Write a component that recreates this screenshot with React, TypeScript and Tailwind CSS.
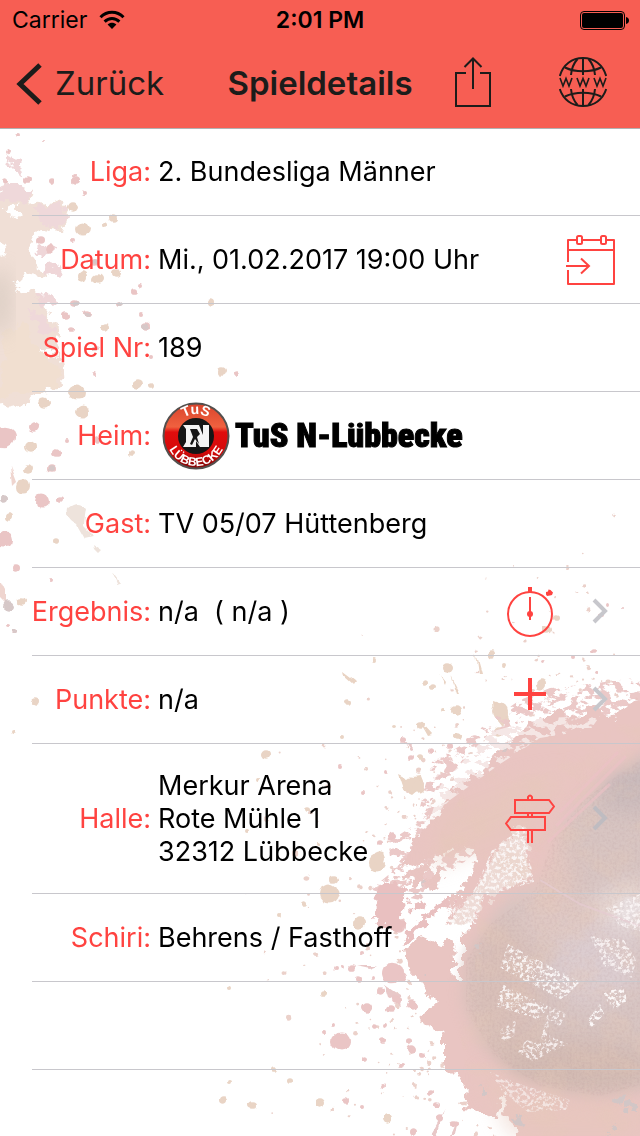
import type { ReactNode } from "react";

// [x, y, radius]
type Dot = [number, number, number];

const sandDots: Dot[] = [
  [73, 207, 5], [82, 229, 7], [114, 218, 4], [106, 226, 3], [82, 276, 5], [98, 279, 5],
  [116, 273, 4], [210, 302, 4], [105, 327, 4], [137, 384, 6], [151, 385, 3], [77, 392, 8],
  [222, 371, 4], [82, 412, 7], [44, 404, 6], [30, 447, 6], [27, 469, 5], [23, 487, 7],
  [9, 516, 4], [57, 541, 3], [22, 601, 4], [35, 701, 4], [14, 733, 2], [131, 453, 3],
  [347, 703, 3], [374, 661, 2], [447, 668, 5], [424, 683, 3], [433, 686, 3], [493, 655, 4],
  [504, 664, 2], [541, 685, 5], [547, 631, 4], [556, 618, 3], [443, 710, 2], [456, 711, 5],
  [458, 736, 4], [421, 724, 4], [393, 726, 2], [342, 738, 2], [266, 756, 5], [308, 808, 3],
  [411, 785, 9], [418, 787, 6], [500, 712, 8], [498, 732, 5], [420, 757, 3], [334, 880, 4],
  [329, 894, 10], [304, 903, 3], [376, 864, 9], [379, 858, 6], [359, 923, 5], [223, 1100, 4],
  [253, 1105, 4], [275, 1069, 3], [290, 1081, 3], [320, 1103, 5], [323, 993, 3], [388, 1119, 5],
  [278, 914, 2], [258, 781, 2], [317, 843, 2], [246, 831, 2], [229, 989, 2], [230, 1081, 2],
];

const roseDots: Dot[] = [
  [17, 136, 2], [43, 140, 1], [8, 150, 2], [4, 179, 3], [27, 180, 3], [51, 181, 3],
  [77, 181, 4], [75, 176, 2], [83, 194, 2], [40, 241, 4], [50, 249, 5], [73, 240, 2],
  [95, 263, 4], [133, 291, 3], [141, 287, 2], [117, 304, 3], [74, 304, 4], [87, 314, 3],
  [65, 315, 4], [72, 330, 3], [146, 326, 4], [151, 357, 2], [141, 314, 2], [96, 348, 3],
  [93, 375, 2], [236, 374, 3], [35, 427, 5], [57, 453, 4], [51, 468, 4], [42, 501, 7],
  [60, 499, 3], [4, 437, 11], [16, 568, 4], [4, 540, 8], [50, 580, 2], [14, 632, 2],
  [7, 626, 2], [66, 441, 2], [96, 440, 3],
  [607, 606, 2], [601, 615, 2], [593, 651, 3], [573, 657, 2], [622, 609, 1], [588, 686, 2],
  [544, 662, 2], [596, 671, 2], [341, 1041, 9], [366, 1007, 5], [352, 968, 3], [342, 967, 2],
  [358, 978, 3], [373, 978, 2], [380, 991, 4], [393, 973, 11], [402, 978, 5], [390, 1009, 4],
  [395, 1000, 4], [399, 1000, 3], [374, 1027, 3], [382, 1041, 3], [385, 1025, 2], [410, 1041, 3],
  [412, 1050, 5], [424, 1056, 3], [364, 1058, 3], [346, 1100, 3], [323, 1033, 2], [332, 1025, 2],
  [412, 1004, 5], [363, 953, 2], [336, 969, 2], [400, 926, 6], [392, 836, 4], [380, 842, 3],
  [363, 793, 2], [341, 765, 2], [386, 772, 2], [410, 757, 3], [430, 750, 3], [404, 739, 3],
  [449, 746, 3], [469, 741, 2], [463, 752, 3], [447, 760, 3], [413, 1131, 4], [430, 1092, 3],
  [440, 1119, 4], [437, 1104, 3], [454, 1124, 4], [402, 1066, 2], [362, 1106, 2], [384, 1085, 2],
];

const greyDots: Dot[] = [
  [8, 606, 5], [51, 468, 3], [76, 305, 3], [118, 304, 3], [145, 326, 3], [95, 262, 3],
  [5, 499, 4], [14, 632, 2], [87, 315, 2], [424, 885, 4],
];

const ballDots: Dot[] = [
  [482, 1092, 4], [620, 1100, 7], [631, 1108, 5], [518, 1120, 4], [478, 948, 4],
  [428, 974, 2], [612, 1128, 4], [502, 750, 3],
];

// Fine droplets spread around the ball, same pattern on every render
const makeSpray = (count: number, seed: number): Dot[] => {
  let state = seed;
  const next = () => {
    state = (state * 16807) % 2147483647;
    return state / 2147483647;
  };
  return Array.from({ length: count }, (): Dot => {
    const angle = Math.PI * (0.5 + next() * 0.86);
    const distance = 215 + next() * next() * 190;
    return [
      618 + Math.cos(angle) * distance,
      925 - Math.sin(angle) * distance * 1.06,
      0.8 + next() * next() * 2.4,
    ];
  });
};

const spray = makeSpray(260, 4711);

const Dots = ({ dots, className }: { dots: Dot[]; className: string }) => (
  <g className={className}>
    {dots.map(([x, y, r], i) => (
      <ellipse key={i} cx={x} cy={y} rx={r} ry={r * 0.94} />
    ))}
  </g>
);

const Splatter = () => (
  <svg
    viewBox="0 0 640 1136"
    preserveAspectRatio="xMaxYMax slice"
    className="absolute inset-0 h-full w-full"
    aria-hidden="true"
  >
    <defs>
      <filter id="rough" x="-10%" y="-10%" width="120%" height="120%" colorInterpolationFilters="sRGB">
        <feTurbulence type="fractalNoise" baseFrequency="0.09" numOctaves="4" seed="8" />
        <feDisplacementMap in="SourceGraphic" scale="18" xChannelSelector="R" yChannelSelector="G" />
      </filter>
      <filter id="drop" x="-5%" y="-5%" width="110%" height="110%" colorInterpolationFilters="sRGB">
        <feTurbulence type="fractalNoise" baseFrequency="0.08" numOctaves="1" seed="3" />
        <feDisplacementMap in="SourceGraphic" scale="8" xChannelSelector="R" yChannelSelector="G" />
      </filter>
      <filter id="soft" x="-30%" y="-30%" width="160%" height="160%" colorInterpolationFilters="sRGB">
        <feGaussianBlur stdDeviation="10" />
      </filter>
      <filter id="edge" x="-10%" y="-10%" width="120%" height="120%" colorInterpolationFilters="sRGB">
        <feGaussianBlur stdDeviation="7" />
      </filter>
      {/* Breaks a shape into torn flecks */}
      <filter id="torn" x="-10%" y="-10%" width="120%" height="120%" colorInterpolationFilters="sRGB">
        <feTurbulence type="fractalNoise" baseFrequency="0.09 0.14" numOctaves="4" seed="21" result="n" />
        <feColorMatrix in="n" type="matrix" values="0 0 0 0 1  0 0 0 0 1  0 0 0 0 1  14 0 0 0 -7" result="m" />
        <feComposite in="SourceGraphic" in2="m" operator="in" />
      </filter>
      <filter id="speckle" x="-10%" y="-10%" width="120%" height="120%" colorInterpolationFilters="sRGB">
        <feTurbulence type="fractalNoise" baseFrequency="0.3" numOctaves="3" seed="5" result="n" />
        <feColorMatrix in="n" type="matrix" values="0 0 0 0 1  0 0 0 0 1  0 0 0 0 1  5 0 0 0 -2.3" result="m" />
        <feComposite in="SourceGraphic" in2="m" operator="in" />
      </filter>
      <filter id="grain" x="0" y="0" width="100%" height="100%" colorInterpolationFilters="sRGB">
        <feTurbulence type="fractalNoise" baseFrequency="0.03 0.04" numOctaves="4" seed="12" result="n" />
        <feColorMatrix in="n" type="matrix" values="0 0 0 0 0.9  0 0 0 0 0.79  0 0 0 0 0.72  0 3 0 0 -1.3" result="m" />
        <feComposite in="m" in2="SourceAlpha" operator="in" />
      </filter>
      <filter id="fibre" x="0" y="0" width="100%" height="100%" colorInterpolationFilters="sRGB">
        <feTurbulence type="fractalNoise" baseFrequency="0.4" numOctaves="2" seed="30" result="n" />
        <feColorMatrix in="n" type="matrix" values="0 0 0 0 0.62  0 0 0 0 0.48  0 0 0 0 0.5  0 3 0 0 -1.2" result="m" />
        <feComposite in="m" in2="SourceAlpha" operator="in" />
      </filter>
      <clipPath id="ballClip">
        <path d="M680 730 L612 774 L583 799 L560 830 L545 870 L530 886 L505 900 L487 922 L466 955 L462 1000 L480 1045 L515 1078 L560 1094 L600 1098 L680 1084Z" />
      </clipPath>
    </defs>

    {/* Left splash */}
    <g filter="url(#rough)">
      <path fill="#f0dfd6" d="M-10 190 L14 184 L34 190 L30 202 L40 206 L62 200 L70 212 L64 230 L40 228 L32 238 L28 254 L36 266 L50 272 L48 278 L26 274 L16 290 L32 288 L42 302 L52 318 L60 334 L58 350 L30 350 L60 356 L62 388 L42 392 L26 402 L-10 408Z" />
      <path fill="#efd8da" d="M-10 190 L14 184 L34 190 L26 204 L10 200 L-10 206Z M36 210 L60 202 L70 214 L60 228 L38 224Z M30 310 L44 312 L56 332 L42 336Z" />
      <path fill="#f1dfd0" d="M4 330 L24 322 L34 346 L56 362 L58 388 L24 394 L0 398Z" />
      <path fill="#efd6d8" d="M4 154 L12 158 L26 172 L22 178 L8 164Z M36 252 L50 242 L54 250 L44 258Z M44 268 L56 264 L60 274 L48 276Z M34 298 L56 296 L58 304 L44 306Z" />
      <path fill="#ffffff" d="M4 208 L16 202 L18 216 L6 220Z M-4 238 L4 244 L8 260 L0 256Z M14 286 L30 284 L24 292Z" />
    </g>
    <ellipse cx="0" cy="302" rx="10" ry="34" fill="#c9beb4" opacity="0.55" filter="url(#soft)" />
    <g filter="url(#drop)">
      <path fill="#eee3dc" d="M68 508 Q78 500 86 508 Q84 520 84 526 L94 536 L84 538 L76 524 Q66 518 68 508Z" />
      <path fill="#eee3dc" d="M92 544 L101 550 L98 553 L93 548Z M112 572 L120 583 L117 584Z" />
      <path fill="#efd5cf" d="M0 578 L6 590 L6 604 L0 598Z M10 466 L16 482 L12 486Z" />
      <path fill="#e9d3c3" d="M342 672 L354 681 L352 684 L343 676Z M439 674 L446 683 L445 686Z M450 675 L459 693 L456 693Z M475 653 L481 675 L478 675Z M420 722 L432 735 L428 736Z M398 774 L406 778 L420 776 L424 786 L412 796 L404 792Z M493 702 L505 706 L510 720 L502 726 L494 716Z" />
      <path fill="#e8c8c8" d="M402 737 L414 750 L411 751Z M356 966 L378 966 L370 969Z M384 985 L400 996 L402 1006 L388 998Z M445 1110 L436 1136 L430 1136Z M457 1120 L454 1136 L450 1136Z" />
      <Dots dots={spray} className="fill-[#ebd1ca]" />
      <Dots dots={sandDots} className="fill-[#e9d4c5]" />
      <Dots dots={roseDots} className="fill-[#eac5c5]" />
      <Dots dots={greyDots} className="fill-[#d6c8c8]" />
    </g>

    {/* Torn fringe along the upper edge */}
    <path
      filter="url(#torn)"
      fill="#ebc9c8"
      d="M650 676 L590 684 L550 688 L520 700 L488 722 L460 746 L432 762 L424 790 L416 824 L388 842 L392 872 L370 890 L420 900 L560 780 L650 720Z"
    />

    {/* Ball splash */}
    <g filter="url(#rough)">
      <path
        fill="#e9c5c2"
        d="M655 698 L626 702 L614 718 L602 708 L588 706 L576 718 L560 710 L548 716 L530 724 L516 738 L500 746 L486 766 L464 780 L450 792 L440 812 L420 832 L410 850 L402 866 L420 864 L450 852 L474 848 L476 862 L466 884 L450 905 L446 920 L470 924 L470 930 L462 936 L462 984 L456 980 L454 942 L440 944 L422 936 L404 950 L408 970 L420 984 L438 1002 L418 1020 L444 1034 L444 1064 L466 1086 L464 1110 L490 1114 L512 1124 L516 1150 L655 1150Z"
      />
      <path fill="#e9c0c0" d="M378 888 L392 880 L406 890 L404 912 L402 930 L392 930 L372 918Z M408 902 L420 898 L424 906 L410 914Z M456 898 L440 912 L404 944 L402 938 L432 910 L446 898Z" />
      <path fill="#e9c5c2" d="M392 878 L420 866 L440 860 L424 872 L426 884 L414 886 L412 876Z M436 868 L444 866 L438 888 L430 896 L428 886Z" />
      <path fill="#ffffff" d="M500 1096 L506 1094 L505 1112 L514 1128 L504 1138 L486 1124 L498 1116Z M440 1074 L456 1078 L464 1092 L450 1096 L436 1086Z" />
    </g>
    <g filter="url(#edge)">
      <g clipPath="url(#ballClip)">
        <path fill="#d8c5c2" d="M440 720 H680 V1110 H440Z" />
        <ellipse cx="500" cy="1000" rx="40" ry="80" fill="#d9c0b9" filter="url(#soft)" />
        <ellipse cx="570" cy="1070" rx="90" ry="30" fill="#d3bbb3" filter="url(#soft)" />
        <ellipse cx="570" cy="920" rx="50" ry="26" fill="#dfc9c5" filter="url(#soft)" />
        <ellipse cx="632" cy="910" rx="34" ry="24" fill="#ebe3e4" filter="url(#soft)" />
        <ellipse cx="630" cy="785" rx="36" ry="26" fill="#c9babb" filter="url(#soft)" />
        <ellipse cx="596" cy="965" rx="46" ry="40" fill="#dccdd0" filter="url(#soft)" />
        <ellipse cx="550" cy="870" rx="22" ry="40" fill="#e3c7c0" filter="url(#soft)" />
      </g>
    </g>
    <path fill="#e6c8bb" opacity="0.5" filter="url(#soft)" d="M440 812 L520 780 L570 770 L530 830 L430 870Z M480 1070 L540 1096 L640 1110 L640 1136 L510 1136Z" />
    <path fill="#f0e1dc" opacity="0.8" filter="url(#rough)" d="M496 850 L524 824 L532 878 L510 886 L486 900 L470 926 L450 922 L474 890Z" />
    <path opacity="0.3" filter="url(#grain)" d="M645 720 L530 740 L462 795 L430 850 L480 870 L474 990 L456 1010 L466 1070 L490 1100 L530 1140 H645Z" />
    <path opacity="0.09" filter="url(#fibre)" d="M645 756 L583 800 L552 840 L535 890 L490 924 L466 960 L466 1010 L494 1056 L540 1086 L600 1096 L645 1084Z" />

    <path stroke="#ecc1c6" strokeWidth="3" opacity="0.6" fill="none" d="M618 752 L560 812 M626 756 L556 826 M610 784 L548 842" />
    <path stroke="#e6ccd2" strokeWidth="2" opacity="0.7" fill="none" d="M540 880 L580 904 L640 926" />
    <g filter="url(#rough)">
      <Dots dots={ballDots} className="fill-[#d2c6c6]" />
    </g>

    {/* Worn print on the ball */}
    <g filter="url(#speckle)" fill="#fcf8f8">
      <path d="M492 850 L524 826 L534 882 L470 900Z" opacity="0.9" />
      <path d="M446 912 L486 890 L476 924 L450 922Z" opacity="0.9" />
      <path d="M508 944 L580 982 L562 1000 L500 968Z" opacity="0.9" />
      <path d="M502 984 L548 1006 L540 1020 L496 1006Z" opacity="0.9" />
      <path d="M500 1030 L516 1020 L514 1036 L502 1042Z M550 1006 L566 1014 L560 1026 L548 1020 L550 1036 L568 1044 L546 1054 L534 1062 L518 1052 L526 1040 L540 1044 L544 1026Z" opacity="0.8" />
      <path d="M602 994 L622 986 L628 1000 L614 1010Z M586 1022 L600 1004 L604 1014 L592 1028Z" />
      <path d="M606 908 L645 892 V932 L620 926Z M590 936 L624 940 L636 960 L632 978 L604 966Z" opacity="0.8" />
      <path d="M490 1072 L520 1084 L570 1100 L566 1110 L528 1112 L504 1094Z" opacity="0.6" />
    </g>
    <g filter="url(#torn)" fill="#faf3f2">
      <path d="M490 732 L540 718 L600 716 L590 730 L540 738 L500 764 L450 800 L430 820 L440 786Z" opacity="0.7" />
    </g>
  </svg>
);

const WifiIcon = () => (
  <svg viewBox="0 0 26 20" className="h-5 w-[26px]" aria-hidden="true">
    <g fill="none" stroke="#000" strokeWidth="3">
      <path d="M1.5 7.2 C8 0.6 18 0.6 24.5 7.2" />
      <path d="M5.6 11.6 C10 7.4 16 7.4 20.4 11.6" />
    </g>
    <path d="M8.6 14.6 C11.2 12.2 14.8 12.2 17.4 14.6 L13 19Z" />
  </svg>
);

const BatteryIcon = () => (
  <svg viewBox="0 0 50 20" className="h-5 w-[50px]" aria-hidden="true">
    <rect x="0.5" y="1.5" width="44" height="18" rx="3.5" fill="none" stroke="#000" />
    <rect x="2" y="3" width="41" height="15" rx="2" />
    <path d="M46 7 C50 7.5 50 13.5 46 14Z" />
  </svg>
);

const ShareIcon = () => (
  <svg viewBox="0 0 36 50" className="h-[50px] w-9" fill="none" stroke="#1c1c1a" strokeWidth="2" aria-hidden="true">
    <path d="M11 16 H1 V49 H35 V16 H25" />
    <path d="M18 32 V2 M9.5 10 L18 1.5 L26.5 10" />
  </svg>
);

const GlobeIcon = () => (
  <svg viewBox="0 0 48 50" className="h-[50px] w-12" fill="none" stroke="#1c1c1a" strokeWidth="2" aria-hidden="true">
    <path d="M0.8 19 C4 7.5 13 1 24 1 C35 1 44 7.5 47.2 19" />
    <path d="M0.8 32 C4 42.5 13 49 24 49 C35 49 44 42.5 47.2 32" />
    <path d="M24 1 V18 M24 32 V49" />
    <path d="M18.5 2 C15 6 12.5 12 12 18 M29.5 2 C33 6 35.5 12 36 18" />
    <path d="M18.5 48 C15 44 12.5 38 12 32 M29.5 48 C33 44 35.5 38 36 32" />
    <path d="M6 10.5 C16 15.5 32 15.5 42 10.5 M6 39.5 C16 34.5 32 34.5 42 39.5" />
    <path strokeWidth="1.6" d="M1 21 L4 29 L7 21.5 L10 29 L13 21 M18 21 L21 29 L24 21.5 L27 29 L30 21 M35 21 L38 29 L41 21.5 L44 29 L47 21" />
  </svg>
);

const CalendarIcon = () => (
  <svg viewBox="0 0 50 50" className="h-[50px] w-[50px]" fill="none" stroke="#ff4340" strokeWidth="2" aria-hidden="true">
    <path d="M2 27 V5 H11 M16 5 H35 M40 5 H48 V49 H2 V35" strokeLinejoin="round" />
    <path d="M2 15 H48 M0 31 H23 M15 23.5 L23 31 L15 38.5" />
    <rect x="11" y="1" width="5" height="8" rx="1.5" />
    <rect x="35" y="1" width="5" height="8" rx="1.5" />
  </svg>
);

const StopwatchIcon = () => (
  <svg viewBox="0 0 48 50" className="h-[50px] w-12" aria-hidden="true">
    <circle cx="24" cy="27" r="22" fill="none" stroke="#ff4340" strokeWidth="2" />
    <g fill="#ff4340">
      <rect x="22" y="0" width="4" height="5" />
      <rect x="23" y="10" width="2" height="23" />
      <circle cx="24" cy="27" r="3" />
      <path d="M40 5 L42 4.5 L42.5 2.5 L44.5 3 L47 5.5 L46 8 L44 8.5 L41 9 L40 7.5Z" />
    </g>
  </svg>
);

const PlusIcon = () => (
  <svg viewBox="0 0 48 48" className="h-12 w-12" aria-hidden="true">
    <path d="M24 2 V34 M8 18 H40" stroke="#ff4340" strokeWidth="4" />
  </svg>
);

const SignpostIcon = () => (
  <svg viewBox="0 0 50 50" className="h-[50px] w-[50px]" fill="none" stroke="#ff4340" strokeWidth="2" aria-hidden="true">
    <path d="M23 6 V3 Q25 0 27 3 V6 M23 19 V23 M27 19 V23 M23 36 V49 M27 36 V49" />
    <path d="M10 6 H44 L49 12.5 L44 19 H10Z" />
    <path d="M40 23 H6 L1 29.5 L6 36 H40Z" />
  </svg>
);

const Chevron = ({ faint = false }: { faint?: boolean }) => (
  <svg viewBox="0 0 16 28" className="h-7 w-4" aria-hidden="true">
    <path d="M2 2 L13 13 L2 24" fill="none" stroke={faint ? "#bfbcc1" : "#c7c7cc"} strokeWidth="4" />
  </svg>
);

const ClubCrest = () => (
  <svg viewBox="0 0 68 68" className="h-[68px] w-[68px] shrink-0" role="img" aria-label="TuS N-Lübbecke">
    <defs>
      <linearGradient id="crest" x1="0" y1="0" x2="0" y2="1">
        <stop offset="0" stopColor="#d9442c" />
        <stop offset="0.36" stopColor="#f0613f" />
        <stop offset="0.44" stopColor="#e00d0d" />
        <stop offset="0.75" stopColor="#d40a0a" />
        <stop offset="1" stopColor="#7e0808" />
      </linearGradient>
      <path id="crestTop" d="M12 34 A22 22 0 0 1 56 34" />
      <path id="crestBottom" d="M4 34 A30 30 0 0 0 64 34" />
    </defs>
    <circle cx="34" cy="34" r="32.5" fill="url(#crest)" stroke="#54504e" strokeWidth="2" />
    <circle cx="34" cy="34" r="18" fill="#161616" />
    <path fill="#f4f4f4" d="M21 23 H37 L41 33 V23 H47 V45 H38 L34 39 V45 H21 L24 40 V27Z" />
    <path fill="#161616" d="M28 27 H35 L38 32 L35 35 L37 42 L33 37 L30 43 L28 42 L31 35Z" />
    <g fill="#fff" fontFamily="Liberation Sans, sans-serif" fontWeight="700" textAnchor="middle">
      <text fontSize="14">
        <textPath href="#crestTop" startOffset="50%">TuS</textPath>
      </text>
      <text fontSize="12">
        <textPath href="#crestBottom" startOffset="50%">LÜBBECKE</textPath>
      </text>
    </g>
  </svg>
);

interface RowProps {
  label: string;
  children: ReactNode;
  action?: ReactNode;
}

const Row = ({ label, children, action }: RowProps) => (
  <div className="ml-8 flex min-h-[88px] items-center border-b border-[#c8c7cc]">
    <dt className="flex w-[119px] shrink-0 justify-end whitespace-nowrap text-[#ff4340]">{label}</dt>
    <dd className="flex min-w-0 flex-1 items-center justify-between pl-[7px]">
      <div className="whitespace-pre">{children}</div>
      {action}
    </dd>
  </div>
);

export default function App() {
  return (
    <div className="relative flex min-h-screen flex-col overflow-hidden bg-white font-['Inter','Liberation_Sans',sans-serif] text-black">
      <Splatter />

      <header className="relative bg-[#f75e53] shadow-[0_1px_0_#b2b2b2]">
        <div className="grid h-10 grid-cols-[1fr_auto_1fr] items-center px-3 text-[23px]">
          <div className="flex items-center gap-3">
            <span>Carrier</span>
            <WifiIcon />
          </div>
          <span className="text-center font-semibold">2:01 PM</span>
          <div className="-mr-0.5 flex justify-end">
            <BatteryIcon />
          </div>
        </div>
        <nav className="grid h-[88px] grid-cols-[1fr_auto_1fr] items-center px-4 text-[#1c1c1a]">
          <button type="button" className="flex items-center gap-3 justify-self-start text-[33px]">
            <svg viewBox="0 0 27 42" className="h-[42px] w-[27px]" aria-hidden="true">
              <path d="M24 2 L4 21 L24 40" fill="none" stroke="#1c1c1a" strokeWidth="5" />
            </svg>
            Zurück
          </button>
          <h1 className="text-[33px] font-semibold">Spieldetails</h1>
          <div className="mr-[17px] flex items-center justify-end gap-[68px] pb-1">
            <button type="button" aria-label="Teilen">
              <ShareIcon />
            </button>
            <button type="button" aria-label="Webseite">
              <GlobeIcon />
            </button>
          </div>
        </nav>
      </header>

      <main className="relative text-[27px] leading-[33px]">
        <dl>
          <Row label="Liga:">2. Bundesliga Männer</Row>
          <Row
            label="Datum:"
            action={
              <button type="button" aria-label="Zum Kalender hinzufügen" className="mr-6">
                <CalendarIcon />
              </button>
            }
          >
            Mi., 01.02.2017 19:00 Uhr
          </Row>
          <Row label="Spiel Nr:">189</Row>
          <Row label="Heim:">
            <div className="flex items-center gap-[5px] pl-1">
              <ClubCrest />
              <span className="font-['Liberation_Sans_Narrow','Roboto_Condensed','Roboto',sans-serif] text-[34px] font-black [-webkit-text-stroke:1px_#000]">
                TuS N-Lübbecke
              </span>
            </div>
          </Row>
          <Row label="Gast:">TV 05/07 Hüttenberg</Row>
          <Row
            label="Ergebnis:"
            action={
              <button type="button" aria-label="Ergebnis melden" className="mr-8 flex items-center gap-[38px]">
                <StopwatchIcon />
                <Chevron />
              </button>
            }
          >
            {"n/a  ( n/a )"}
          </Row>
          <Row
            label="Punkte:"
            action={
              <button type="button" aria-label="Punkte eintragen" className="mr-8 flex items-center gap-[38px]">
                <PlusIcon />
                <Chevron />
              </button>
            }
          >
            n/a
          </Row>
          <Row
            label="Halle:"
            action={
              <button type="button" aria-label="Route zur Halle" className="mr-8 flex items-center gap-[37px]">
                <SignpostIcon />
                <Chevron faint />
              </button>
            }
          >
            <address className="py-[25px] not-italic">{"Merkur Arena\nRote Mühle 1\n32312 Lübbecke"}</address>
          </Row>
          <Row label="Schiri:">Behrens / Fasthoff</Row>
        </dl>
        <div className="ml-8 h-[88px] border-b border-[#c8c7cc]" />
      </main>
    </div>
  );
}
